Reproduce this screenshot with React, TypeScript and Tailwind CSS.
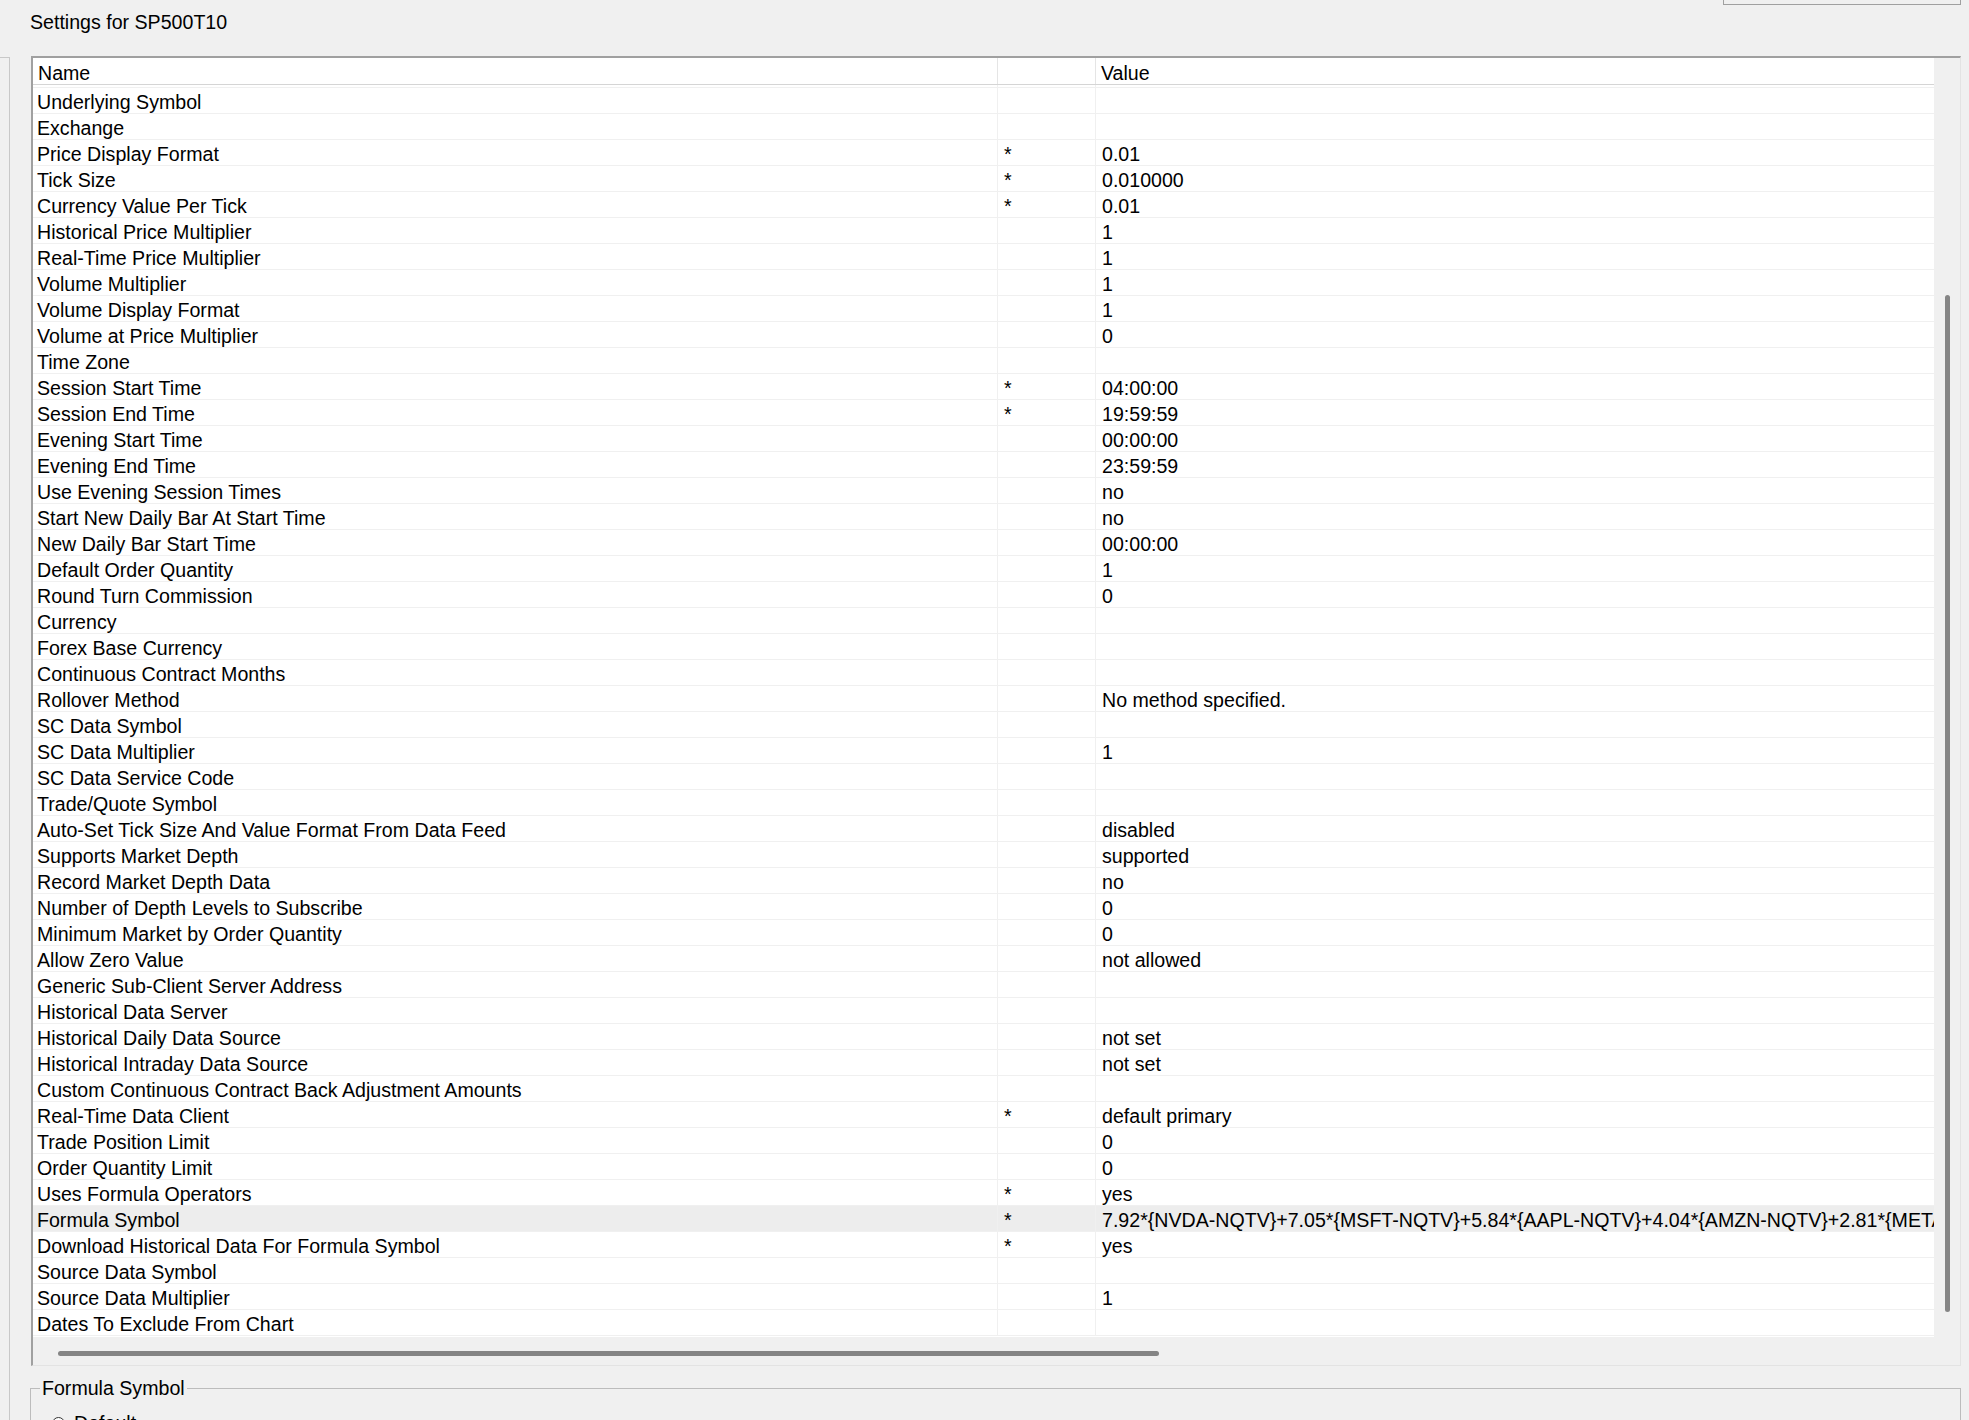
import React from "react";

const rows: [string, string, string][] = [
  ["Underlying Symbol", "", ""],
  ["Exchange", "", ""],
  ["Price Display Format", "*", "0.01"],
  ["Tick Size", "*", "0.010000"],
  ["Currency Value Per Tick", "*", "0.01"],
  ["Historical Price Multiplier", "", "1"],
  ["Real-Time Price Multiplier", "", "1"],
  ["Volume Multiplier", "", "1"],
  ["Volume Display Format", "", "1"],
  ["Volume at Price Multiplier", "", "0"],
  ["Time Zone", "", ""],
  ["Session Start Time", "*", "04:00:00"],
  ["Session End Time", "*", "19:59:59"],
  ["Evening Start Time", "", "00:00:00"],
  ["Evening End Time", "", "23:59:59"],
  ["Use Evening Session Times", "", "no"],
  ["Start New Daily Bar At Start Time", "", "no"],
  ["New Daily Bar Start Time", "", "00:00:00"],
  ["Default Order Quantity", "", "1"],
  ["Round Turn Commission", "", "0"],
  ["Currency", "", ""],
  ["Forex Base Currency", "", ""],
  ["Continuous Contract Months", "", ""],
  ["Rollover Method", "", "No method specified."],
  ["SC Data Symbol", "", ""],
  ["SC Data Multiplier", "", "1"],
  ["SC Data Service Code", "", ""],
  ["Trade/Quote Symbol", "", ""],
  ["Auto-Set Tick Size And Value Format From Data Feed", "", "disabled"],
  ["Supports Market Depth", "", "supported"],
  ["Record Market Depth Data", "", "no"],
  ["Number of Depth Levels to Subscribe", "", "0"],
  ["Minimum Market by Order Quantity", "", "0"],
  ["Allow Zero Value", "", "not allowed"],
  ["Generic Sub-Client Server Address", "", ""],
  ["Historical Data Server", "", ""],
  ["Historical Daily Data Source", "", "not set"],
  ["Historical Intraday Data Source", "", "not set"],
  ["Custom Continuous Contract Back Adjustment Amounts", "", ""],
  ["Real-Time Data Client", "*", "default primary"],
  ["Trade Position Limit", "", "0"],
  ["Order Quantity Limit", "", "0"],
  ["Uses Formula Operators", "*", "yes"],
  [
    "Formula Symbol",
    "*",
    "7.92*{NVDA-NQTV}+7.05*{MSFT-NQTV}+5.84*{AAPL-NQTV}+4.04*{AMZN-NQTV}+2.81*{META-NQTV}+2.15*{AVGO-NQTV}+1.93*{GOOGL-NQTV}",
  ],
  ["Download Historical Data For Formula Symbol", "*", "yes"],
  ["Source Data Symbol", "", ""],
  ["Source Data Multiplier", "", "1"],
  ["Dates To Exclude From Chart", "", ""],
];

function Row({ name, star, value }: { name: string; star: string; value: string }) {
  const selected = name === "Formula Symbol";
  return (
    <div
      className={`flex h-[26px] border-b border-[#f0f0f0] ${selected ? "bg-[#ededed]" : "bg-white"}`}
    >
      <div className="w-[965px] shrink-0 border-r border-[#f0f0f0] pl-[4px] pt-[1px] whitespace-nowrap">
        {name}
      </div>
      <div className="w-[98px] shrink-0 border-r border-[#f0f0f0] pl-[6px] pt-[1px]">{star}</div>
      <div className="min-w-0 flex-1 overflow-hidden pl-[6px] pt-[1px] whitespace-nowrap">{value}</div>
    </div>
  );
}

export default function App() {
  return (
    <div className="h-[1420px] w-[1969px] overflow-hidden bg-[#f0f0f0] font-['Liberation_Sans',Arial,sans-serif] text-[19.6px] leading-[26px] text-black">
      <div className="flex h-[56px] items-start justify-between">
        <div className="pl-[30px] pt-[9px]">Settings for SP500T10</div>
        <div className="mr-[8px] h-[5px] w-[238px] border-x border-b border-[#a0a0a0]" />
      </div>

      <div className="flex">
        <div className="mt-[1px] h-[1400px] w-[10px] shrink-0 border-r border-t border-[#c8c8c8]" />

        <div className="ml-[21px] flex w-[1930px] flex-col">
          {/* list frame */}
          <div className="flex h-[1310px] flex-col border-b border-l-2 border-r border-t-2 border-b-[#e3e3e3] border-l-[#a0a0a0] border-r-[#e3e3e3] border-t-[#a0a0a0]">
            <div className="flex h-[1279px]">
              <div className="flex w-[1901px] flex-col bg-white">
                <div className="flex h-[27px] border-b border-[#d5d5d5] bg-white">
                  <div className="w-[965px] shrink-0 border-r border-[#e5e5e5] pl-[5px] pt-[2px]">Name</div>
                  <div className="w-[98px] shrink-0 border-r border-[#e5e5e5]" />
                  <div className="flex-1 pl-[5px] pt-[2px]">Value</div>
                </div>
                <div className="flex h-[3px] border-b border-[#f0f0f0]">
                  <div className="w-[965px] shrink-0 border-r border-[#f0f0f0]" />
                  <div className="w-[98px] shrink-0 border-r border-[#f0f0f0]" />
                </div>
                {rows.map((r) => (
                  <Row key={r[0]} name={r[0]} star={r[1]} value={r[2]} />
                ))}
              </div>
              <div className="w-[26px] bg-[#f0f0f0]">
                <div className="ml-[11px] mt-[237px] h-[1017px] w-[5px] rounded-full bg-[#858585]" />
              </div>
            </div>
            <div className="h-[28px] bg-[#f0f0f0]">
              <div className="ml-[25px] mt-[14px] h-[5px] w-[1101px] rounded-full bg-[#858585]" />
            </div>
          </div>

          {/* group box */}
          <fieldset className="-ml-[1px] mt-[11px] h-[200px] border border-[#bcbcbc]">
            <legend className="ml-[9px] px-[2px] leading-[22px]">Formula Symbol</legend>
            <div className="mt-[11px] flex items-center gap-[9px] pl-[21px]">
              <span className="inline-block h-[13px] w-[13px] rounded-full border border-[#333] bg-white" />
              <span>Default</span>
            </div>
          </fieldset>
        </div>
      </div>
    </div>
  );
}
